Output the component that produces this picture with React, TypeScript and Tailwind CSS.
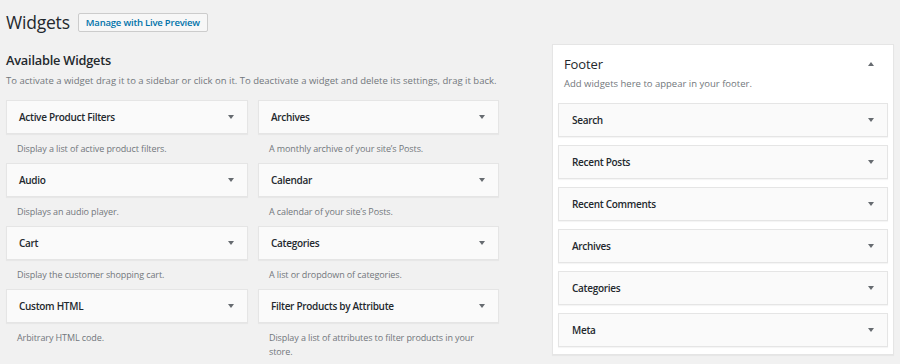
const AVAILABLE = [
  { name: "Active Product Filters", desc: "Display a list of active product filters." },
  { name: "Archives", desc: "A monthly archive of your site\u2019s Posts." },
  { name: "Audio", desc: "Displays an audio player." },
  { name: "Calendar", desc: "A calendar of your site\u2019s Posts." },
  { name: "Cart", desc: "Display the customer shopping cart." },
  { name: "Categories", desc: "A list or dropdown of categories." },
  { name: "Custom HTML", desc: "Arbitrary HTML code." },
  {
    name: "Filter Products by Attribute",
    desc: "Display a list of attributes to filter products in your store.",
  },
];

const FOOTER_WIDGETS = [
  "Search",
  "Recent Posts",
  "Recent Comments",
  "Archives",
  "Categories",
  "Meta",
];

function Arrow({ up = false }: { up?: boolean }) {
  return (
    <svg width="6" height="4" viewBox="0 0 6 4" className="shrink-0">
      <path d={up ? "M0 4 L3 0 L6 4 Z" : "M0 0 L6 0 L3 4 Z"} fill="#666b70" />
    </svg>
  );
}

function WidgetCard({ name }: { name: string }) {
  return (
    <div className="h-[34px] flex items-center justify-between pl-[12px] pr-[13px] bg-[#fafafa] border border-[#e5e5e5] shadow-[0_1px_1px_rgba(0,0,0,0.04)]">
      <span className="text-[10px] tracking-[-0.3px] font-semibold text-[#23282d] leading-[14px]">{name}</span>
      <Arrow />
    </div>
  );
}

export default function App() {
  return (
    <div
      className="w-[900px] h-[364px] overflow-hidden bg-[#f1f1f1] text-[#444]"
      style={{ fontFamily: '"Open Sans", "Noto Sans", "Liberation Sans", sans-serif' }}
    >
      {/* Heading */}
      <div className="flex items-center pt-[13px] pl-[6px] h-[32px]">
        <h1 className="text-[17.5px] tracking-[-0.2px] leading-[19px] text-[#23282d] font-normal">Widgets</h1>
        <button className="ml-[8px] h-[19px] w-[130px] bg-[#f7f7f7] border border-[#cccccc] rounded-[2px] text-[9.5px] tracking-[-0.2px] font-semibold text-[#0073aa] leading-[17px]">
          Manage with Live Preview
        </button>
      </div>

      <div className="flex mt-[12px]">
        {/* Available widgets */}
        <div className="ml-[6px] w-[493px]">
          <h2 className="mt-[6px] text-[12.75px] tracking-[-0.2px] leading-[20px] font-semibold text-[#23282d]">
            Available Widgets
          </h2>
          <p className="mt-[3px] text-[9.5px] leading-[16px] text-[#72777c] whitespace-nowrap">
            To activate a widget drag it to a sidebar or click on it. To deactivate a widget and delete its settings, drag it back.
          </p>
          <div className="mt-[11px] grid grid-cols-[242px_241px] gap-x-[10px]">
            {AVAILABLE.map((w) => (
              <div key={w.name} className="h-[63px]">
                <WidgetCard name={w.name} />
                <p className="pt-[8px] pl-[11px] pr-[20px] text-[9px] tracking-[-0.1px] leading-[14px] text-[#72777c]">
                  {w.desc}
                </p>
              </div>
            ))}
          </div>
        </div>

        {/* Footer sidebar */}
        <div className="ml-[53px] w-[342px] h-[311px] bg-white border border-[#e5e5e5] shadow-[0_1px_1px_rgba(0,0,0,0.04)] px-[5px]">
          <div className="flex items-center justify-between pt-[10px] pl-[6px] pr-[14px]">
            <span className="text-[13px] tracking-[-0.1px] leading-[18px] text-[#23282d]">Footer</span>
            <Arrow up />
          </div>
          <p className="mt-[4px] pl-[6px] text-[9.5px] leading-[14px] text-[#72777c]">
            Add widgets here to appear in your footer.
          </p>
          <div className="mt-[12px] flex flex-col gap-[8px]">
            {FOOTER_WIDGETS.map((n) => (
              <div
                key={n}
                className="h-[34px] flex items-center justify-between pl-[13px] pr-[13px] bg-[#fafafa] border border-[#e5e5e5] shadow-[0_1px_1px_rgba(0,0,0,0.04)]"
              >
                <span className="text-[10px] tracking-[-0.3px] font-semibold text-[#23282d] leading-[14px]">{n}</span>
                <Arrow />
              </div>
            ))}
          </div>
        </div>
      </div>
    </div>
  );
}
